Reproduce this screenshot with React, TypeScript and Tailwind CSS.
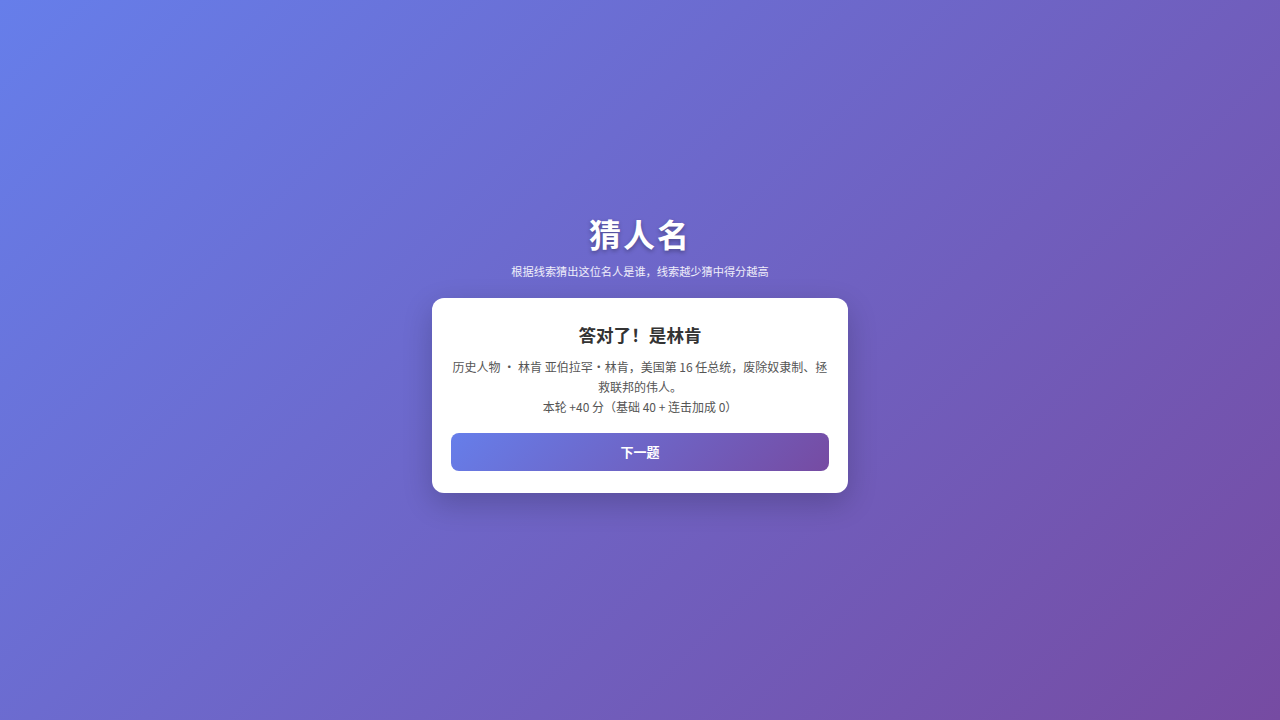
import React from "react";

export default function App() {
  return (
    <div
      className="min-h-screen w-full flex flex-col items-center justify-center pb-[14px] bg-[linear-gradient(135deg,#667eea_0%,#764ba2_100%)]"
      style={{ fontFamily: '"Noto Sans CJK SC", "Noto Sans", sans-serif' }}
    >
      <h1 className="text-[32px] leading-[38px] font-bold text-white tracking-[2px] [text-shadow:0_2px_4px_rgba(0,0,0,0.3)]">
        猜人名
      </h1>
      <p className="mt-[10px] text-[11.2px] leading-[18px] text-white/90">
        根据线索猜出这位名人是谁，线索越少猜中得分越高
      </p>
      <div className="mt-[18px] w-[416px] bg-white rounded-xl shadow-[0_10px_30px_rgba(0,0,0,0.2)] px-[19px] pt-6 pb-[22px] flex flex-col items-center">
        <h2 className="text-[17.6px] leading-[26px] font-bold text-[#333]">答对了！是林肯</h2>
        <div className="mt-[9px] text-[12px] leading-[20px] text-[#555] text-center">
          <p>历史人物 · 林肯 亚伯拉罕·林肯，美国第 16 任总统，废除奴隶制、拯救联邦的伟人。</p>
          <p>本轮 +40 分（基础 40 + 连击加成 0）</p>
        </div>
        <button className="mt-4 w-full h-[38px] rounded-lg text-white text-[13px] font-bold bg-[linear-gradient(135deg,#667eea_0%,#764ba2_100%)]">
          下一题
        </button>
      </div>
    </div>
  );
}
